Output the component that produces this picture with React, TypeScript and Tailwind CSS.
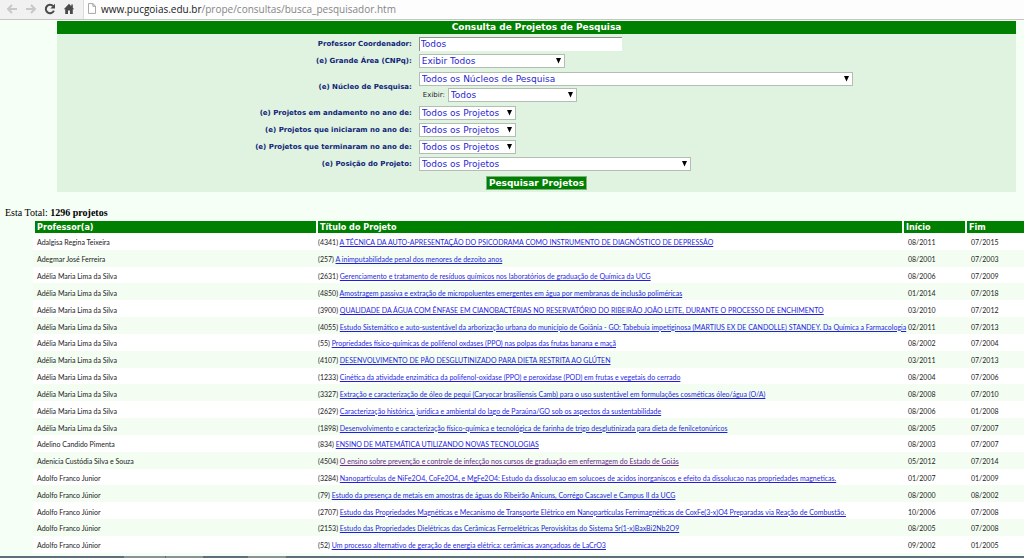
import type { ReactNode } from 'react';

type Project = { professor: string; id: number; title: string; start: string; end: string; visited?: boolean };

const adelia = 'Adélia Maria Lima da Silva';
const adolfo = 'Adolfo Franco Júnior';

const projects: Project[] = [
  { professor: 'Adalgisa Regina Teixeira', id: 4341, title: 'A TÉCNICA DA AUTO-APRESENTAÇÃO DO PSICODRAMA COMO INSTRUMENTO DE DIAGNÓSTICO DE DEPRESSÃO', start: '08/2011', end: '07/2015' },
  { professor: 'Adegmar José Ferreira', id: 257, title: 'A inimputabilidade penal dos menores de dezoito anos', start: '08/2001', end: '07/2003' },
  { professor: adelia, id: 2631, title: 'Gerenciamento e tratamento de resíduos químicos nos laboratórios de graduação de Química da UCG', start: '08/2006', end: '07/2009' },
  { professor: adelia, id: 4850, title: 'Amostragem passiva e extração de micropoluentes emergentes em água por membranas de inclusão poliméricas', start: '01/2014', end: '07/2018' },
  { professor: adelia, id: 3900, title: 'QUALIDADE DA ÁGUA COM ÊNFASE EM CIANOBACTÉRIAS NO RESERVATÓRIO DO RIBEIRÃO JOÃO LEITE, DURANTE O PROCESSO DE ENCHIMENTO', start: '03/2010', end: '07/2012' },
  { professor: adelia, id: 4055, title: 'Estudo Sistemático e auto-sustentável da arborização urbana do município de Goiânia - GO: Tabebuia impetiginosa (MARTIUS EX DE CANDOLLE) STANDEY. Da Química a Farmacologia', start: '02/2011', end: '07/2013' },
  { professor: adelia, id: 55, title: 'Propriedades físico-químicas de polifenol oxdases (PPO) nas polpas das frutas banana e maçã', start: '08/2002', end: '07/2004' },
  { professor: adelia, id: 4107, title: 'DESENVOLVIMENTO DE PÃO DESGLUTINIZADO PARA DIETA RESTRITA AO GLÚTEN', start: '03/2011', end: '07/2013' },
  { professor: adelia, id: 1233, title: 'Cinética da atividade enzimática da polifenol-oxidase (PPO) e peroxidase (POD) em frutas e vegetais do cerrado', start: '08/2004', end: '07/2006' },
  { professor: adelia, id: 3327, title: 'Extração e caracterização de óleo de pequi (Caryocar brasiliensis Camb) para o uso sustentável em formulações cosméticas óleo/água (O/A)', start: '08/2008', end: '07/2010' },
  { professor: adelia, id: 2629, title: 'Caracterização histórica, jurídica e ambiental do lago de Paraúna/GO sob os aspectos da sustentabilidade', start: '08/2006', end: '01/2008' },
  { professor: adelia, id: 1898, title: 'Desenvolvimento e caracterização físico-química e tecnológica de farinha de trigo desglutinizada para dieta de fenilcetonúricos', start: '08/2005', end: '07/2007' },
  { professor: 'Adelino Candido Pimenta', id: 834, title: 'ENSINO DE MATEMÁTICA UTILIZANDO NOVAS TECNOLOGIAS', start: '08/2003', end: '07/2007' },
  { professor: 'Adenicia Custódia Silva e Souza', id: 4504, title: 'O ensino sobre prevenção e controle de infecção nos cursos de graduação em enfermagem do Estado de Goiás', start: '05/2012', end: '07/2014', visited: true },
  { professor: 'Adolfo Franco Junior', id: 3284, title: 'Nanopartículas de NiFe2O4, CoFe2O4, e MgFe2O4: Estudo da dissolucao em solucoes de acidos inorganiscos e efeito da dissolucao nas propriedades magneticas.', start: '01/2007', end: '01/2009' },
  { professor: adolfo, id: 79, title: 'Estudo da presença de metais em amostras de águas do Ribeirão Anicuns, Corrégo Cascavel e Campus II da UCG', start: '08/2000', end: '08/2002' },
  { professor: adolfo, id: 2707, title: 'Estudo das Propriedades Magnéticas e Mecanismo de Transporte Elétrico em Nanopartículas Ferrimagnéticas de CoxFe(3-x)O4 Preparadas via Reação de Combustão.', start: '10/2006', end: '07/2008' },
  { professor: adolfo, id: 2153, title: 'Estudo das Propriedades Dielétricas das Cerâmicas Ferroelétricas Peroviskitas do Sistema Sr(1-x)BaxBi2Nb2O9', start: '08/2005', end: '07/2008' },
  { professor: adolfo, id: 52, title: 'Um processo alternativo de geração de energia elétrica: cerâmicas avançadoas de LaCrO3', start: '09/2002', end: '01/2005' },
];

function Select({ id, option, width }: { id: string; option: string; width: string }) {
  return (
    <span className={`relative block h-[14px] ${width}`}>
      <select id={id} className="block h-full w-full appearance-none border border-[#b4bdb4] bg-white pl-[2px] text-[9px] leading-[12px] text-[#2a1fd0]">
        <option>{option}</option>
      </select>
      <svg viewBox="0 0 5 6" className="pointer-events-none absolute right-[4px] top-[4px] h-[6px] w-[5px]" aria-hidden="true">
        <path d="M0 0h5L2.5 5.5z" fill="#000" />
      </svg>
    </span>
  );
}

function Field({ id, label, children }: { id: string; label: string; children: ReactNode }) {
  return (
    <div className="grid grid-cols-[37%_1fr] items-center gap-[7px]">
      <label htmlFor={id} className="text-right text-[7px] font-bold leading-[12px] text-[#0f1f78]">{label}</label>
      <div>{children}</div>
    </div>
  );
}

function BrowserBar() {
  return (
    <header className="flex h-[20px] shrink-0 items-center border-b border-[#c4c4c4] bg-[#f1f1f1]">
      <nav className="flex w-[83px] items-center gap-[7px] pb-[2px] pl-[6px]">
        <button aria-label="Voltar" className="size-[12px]">
          <svg viewBox="0 0 12 12" fill="none" stroke="#c8c8c8" strokeWidth="2"><path d="M11 6H2M6 2L2 6l4 4" /></svg>
        </button>
        <button aria-label="Avançar" className="size-[12px]">
          <svg viewBox="0 0 12 12" fill="none" stroke="#c8c8c8" strokeWidth="2"><path d="M1 6h9M6 2l4 4-4 4" /></svg>
        </button>
        <button aria-label="Recarregar" className="size-[12px]">
          <svg viewBox="0 0 12 12"><path d="M9.2 3.2A4.2 4.2 0 1 0 9.9 7.6" fill="none" stroke="#4a4a4a" strokeWidth="2" /><path d="M11 0.8v4.7H6.3z" fill="#4a4a4a" /></svg>
        </button>
        <button aria-label="Página inicial" className="size-[12px]">
          <svg viewBox="0 0 12 12" fill="#4a4a4a"><path d="M6 0.8L0.8 6.3h1.4V11H5V7.5h2V11h2.8V6.3h1.4L9.8 4.8V1.5H8.3v1.7z" /></svg>
        </button>
      </nav>
      <div className="flex h-full flex-1 items-center gap-[5px] border-l border-[#dcdcdc] bg-[#fdfdfd] pb-[2px] pl-[4px]">
        <svg viewBox="0 0 9 12" className="h-[11px] w-[8px]" fill="#fff" stroke="#9a9a9a"><path d="M0.5 0.5h5l3 3v8h-8zM5.5 0.5v3h3" /></svg>
        <span className="font-['Open_Sans',sans-serif] text-[10px] leading-[16px] text-[#858585]">
          <span className="text-[#202020]">www.pucgoias.edu.br</span>/prope/consultas/busca_pesquisador.htm
        </span>
      </div>
    </header>
  );
}

export default function App() {
  return (
    <div className="flex h-screen flex-col overflow-hidden bg-[#f6fff5] font-['DejaVu_Sans',sans-serif]">
      <BrowserBar />
      <form className="ml-[57px] mr-[8px] mt-px bg-[#e0f2e0] pb-[2px]" onSubmit={(e) => e.preventDefault()}>
        <h1 className="mb-[3px] bg-[#008000] text-center text-[9px] font-bold leading-[13px] text-white">Consulta de Projetos de Pesquisa</h1>
        <div className="flex flex-col gap-[3px]">
          <Field id="prof" label="Professor Coordenador:">
            <input id="prof" type="text" defaultValue="Todos" className="block h-[14px] w-[203px] border-l border-t border-[#8a948a] bg-white pb-[2px] pl-px text-[9px] leading-[11px] text-[#2a1fd0]" />
          </Field>
          <Field id="area" label="(e) Grande Área (CNPq):">
            <Select id="area" option="Exibir Todos" width="w-[146px]" />
          </Field>
          <Field id="nucleo" label="(e) Núcleo de Pesquisa:">
            <div className="flex flex-col gap-[2px] py-px">
              <Select id="nucleo" option="Todos os Núcleos de Pesquisa" width="w-[434px]" />
              <div className="flex items-center gap-[3px] pl-[4px]">
                <label htmlFor="exibir" className="text-[7px] leading-[12px] text-[#222]">Exibir:</label>
                <Select id="exibir" option="Todos" width="w-[129px]" />
              </div>
            </div>
          </Field>
          <Field id="andamento" label="(e) Projetos em andamento no ano de:">
            <Select id="andamento" option="Todos os Projetos" width="w-[97px]" />
          </Field>
          <Field id="inicio" label="(e) Projetos que iniciaram no ano de:">
            <Select id="inicio" option="Todos os Projetos" width="w-[97px]" />
          </Field>
          <Field id="termino" label="(e) Projetos que terminaram no ano de:">
            <Select id="termino" option="Todos os Projetos" width="w-[97px]" />
          </Field>
          <Field id="posicao" label="(e) Posição do Projeto:">
            <Select id="posicao" option="Todos os Projetos" width="w-[272px]" />
          </Field>
          <div className="flex justify-center pt-[2px]">
            <button type="submit" className="h-[14px] border border-[#7fb27f] bg-[#008000] px-[2px] text-[9px] font-bold leading-[12px] text-white">Pesquisar Projetos</button>
          </div>
        </div>
      </form>
      <p className="mt-[12px] pl-[5px] font-['Liberation_Serif',serif] text-[10px] leading-[17px] text-black">
        Esta Total: <b>1296 projetos</b>
      </p>
      <main className="ml-[33px] min-h-0 flex-1">
        <table className="h-full w-full table-fixed border-separate border-spacing-0 text-[7px] text-[#222]">
          <colgroup>
            <col className="w-[285px]" />
            <col />
            <col className="w-[63px]" />
            <col className="w-[57px]" />
          </colgroup>
          <thead className="font-['DejaVu_Sans_Condensed','DejaVu_Sans',sans-serif]">
            <tr className="h-[12px] bg-[#008000] text-left text-[9px] leading-[12px] text-white">
              <th className="border-x-2 border-[#f6fff5] px-[2px]">Professor(a)</th>
              <th className="border-r-2 border-[#f6fff5] px-[2px]">Título do Projeto</th>
              <th className="border-r-2 border-[#f6fff5] px-[2px]">Início</th>
              <th className="px-[2px]">Fim</th>
            </tr>
          </thead>
          <tbody className="font-['Lato','DejaVu_Sans',sans-serif]">
            {projects.map((p) => (
              <tr key={p.id} className="whitespace-nowrap leading-[10px] odd:bg-white even:bg-[#f3fdf2]">
                <td className="px-[4px] pt-[2px]">{p.professor}</td>
                <td className="pt-[2px]">
                  ({p.id}){' '}
                  <a href="#projeto" className={p.visited ? 'text-[#6b2a8c] underline' : 'text-[#1f1fe0] underline'}>{p.title}</a>
                </td>
                <td className="px-[4px] pt-[2px]">{p.start}</td>
                <td className="px-[4px] pt-[2px]">{p.end}</td>
              </tr>
            ))}
          </tbody>
        </table>
      </main>
      <footer className="mt-[3px] flex h-[2px] shrink-0 gap-px bg-[#5d6f78] pl-[124px]" aria-hidden="true">
        <span className="w-[41px] bg-[#8b9494]" />
        <span className="mr-[44px] w-[37px] bg-[#8b9494]" />
        <span className="w-[38px] bg-[#8b9494]" />
      </footer>
    </div>
  );
}
